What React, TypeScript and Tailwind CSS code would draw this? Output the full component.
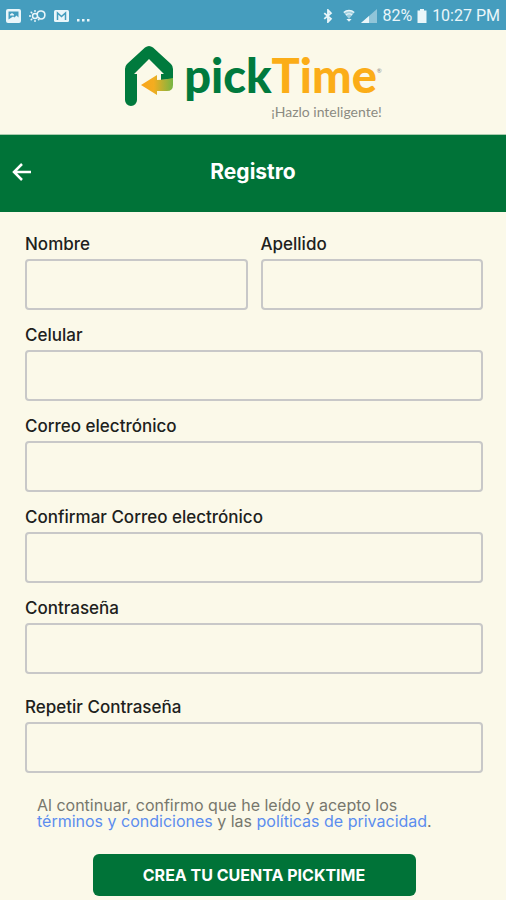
import { useState } from "react"
import type { FormEvent } from "react"

interface FieldProps {
  id: string
  label: string
  type?: string
  className?: string
}

function Field({ id, label, type = "text", className = "" }: FieldProps) {
  const [value, setValue] = useState("")

  return (
    <div className={`flex min-w-0 flex-col gap-[5px] ${className}`}>
      <label htmlFor={id} className="text-[17px] leading-5 font-medium text-[#20211c]">
        {label}
      </label>
      <input
        id={id}
        type={type}
        value={value}
        onChange={(e) => setValue(e.target.value)}
        className="h-[51px] w-full rounded border-2 border-[#c8c8c8] bg-transparent px-3 text-base outline-none focus:border-[#007338]"
      />
    </div>
  )
}

function StatusBar() {
  return (
    <div className="flex h-[30px] items-center justify-between bg-[#459dbe] px-[6px] pt-[2px] font-['Roboto',sans-serif] text-base text-[#eaf6fa]">
      <div className="flex items-center gap-2">
        <svg width="15" height="14" viewBox="0 0 15 14" aria-hidden="true">
          <rect width="15" height="14" rx="2" fill="#eaf6fa" />
          <path d="M2.5 2.5h10v6l-2-2-2 2-1.5-1-4.500 3z" fill="#459dbe" />
          <path d="M4 5.500l2-1.500 2 1.500v1H4z" fill="#eaf6fa" />
        </svg>
        <svg width="17" height="14" viewBox="0 0 17 14" fill="none" stroke="#eaf6fa" aria-hidden="true">
          <circle cx="6" cy="7" r="2.500" strokeWidth="1.500" />
          <path d="M6 1v2M6 11v2M0 7h2M1.700 2.700l1.500 1.500M1.700 11.300l1.500-1.500M9 10l1.300 1.300" strokeWidth="1.400" />
          <path d="M8 5a4 4 0 1 1 4 5c-2 0-2-1.500-3-2" strokeWidth="1.600" />
        </svg>
        <svg width="15" height="12" viewBox="0 0 15 12" aria-hidden="true">
          <rect width="15" height="12" rx="1.500" fill="#eaf6fa" />
          <path d="M3.500 10V3l4 3.500 4-3.500v7" fill="none" stroke="#459dbe" strokeWidth="1.500" />
        </svg>
        <svg width="13" height="14" viewBox="0 0 13 14" fill="#eaf6fa" aria-hidden="true">
          <path d="M0 10h2.500v2.500H0zM5 10h2.500v2.500H5zM10 10h2.500v2.500H10z" />
        </svg>
      </div>
      <div className="flex items-center gap-[5px]">
        <svg width="10" height="14" viewBox="0 0 12 16" fill="none" stroke="#eaf6fa" strokeWidth="2.200" aria-hidden="true">
          <path d="M1.500 4.500l8 7L6 15V1l3.500 3.500-8 7" />
        </svg>
        <svg width="14" height="14" viewBox="0 0 16 15" className="ml-1" aria-hidden="true">
          <path d="M2 3.500a9 9 0 0 1 12 0L8 11z" fill="#eaf6fa" opacity=".55" />
          <path d="M2 3.500a9 9 0 0 1 12 0M4.500 6.500a5 5 0 0 1 7 0" fill="none" stroke="#eaf6fa" strokeWidth="1.500" />
          <path d="M5 11l3 3 3-3z" fill="#eaf6fa" />
        </svg>
        <svg width="16" height="14" viewBox="0 0 16 14" aria-hidden="true">
          <path d="M0 14L16 0v14z" fill="#eaf6fa" opacity=".45" />
          <path d="M0 14l8-7v7z" fill="#eaf6fa" />
        </svg>
        <span>82%</span>
        <svg width="10" height="14" viewBox="0 0 10 14" fill="#eaf6fa" aria-hidden="true">
          <path d="M3 0h4v1.500h2.500V14H.5V1.500H3z" />
        </svg>
        <time>10:27 PM</time>
      </div>
    </div>
  )
}

function Logo() {
  return (
    <div className="flex h-[104px] justify-center gap-[10px] pt-4">
      <svg width="50" height="62" viewBox="0 0 50 62" aria-hidden="true">
        <defs>
          <linearGradient id="arrow" x1="0" x2="1">
            <stop offset="0" stopColor="#f9a51a" />
            <stop offset=".4" stopColor="#f3ad20" />
            <stop offset="1" stopColor="#75b543" />
          </linearGradient>
        </defs>
        <path
          d="M1 23q0-3 2-5L21 1.500q4-3 8 0L47 18q2 2 2 5v10l-12 1v-6h3L25 13 10 28h3v26a6 6 0 0 1-12 0z"
          fill="#007a3d"
        />
        <path d="M17 39l16-10v5q8 0 16-2v7q0 6-6 6H33v4z" fill="url(#arrow)" />
      </svg>
      <div className="flex flex-col">
        <div className="flex items-start font-['Lato',sans-serif] text-[47px] leading-[58px] font-black">
          <span className="text-[#007a3d]">pick</span>
          <span className="text-[#fbad18]">Time</span>
          <span className="mt-5 text-[6px] leading-[10px] font-normal text-[#888]">®</span>
        </div>
        <p className="self-end font-['Lato',sans-serif] text-sm leading-4 text-[#8b8b82]">¡Hazlo inteligente!</p>
      </div>
    </div>
  )
}

export default function App() {
  const handleSubmit = (e: FormEvent) => {
    e.preventDefault()
  }

  return (
    <div className="min-h-screen bg-[#fbf9e9] font-['Inter',sans-serif]">
      <StatusBar />
      <Logo />

      {/* Title bar */}
      <header className="grid h-[78px] grid-cols-[48px_1fr_48px] items-center border-t border-[#a9ccae] bg-[#007338] pb-1 text-white">
        <button type="button" aria-label="Volver" className="flex h-12 items-center pl-3">
          <svg width="20" height="20" viewBox="0 0 20 20" fill="none" stroke="currentColor" strokeWidth="2.500" aria-hidden="true">
            <path d="M19 10H2M10 2l-8 8 8 8" />
          </svg>
        </button>
        <h1 className="text-center text-[21px] font-bold">Registro</h1>
      </header>

      <form onSubmit={handleSubmit} className="flex flex-col pt-[22px] pr-[23px] pb-[3px] pl-[25px]">
        <div className="flex flex-col gap-[15px]">
          <div className="grid grid-cols-2 gap-[13px]">
            <Field id="nombre" label="Nombre" />
            <Field id="apellido" label="Apellido" />
          </div>
          <Field id="celular" label="Celular" type="tel" />
          <Field id="correo" label="Correo electrónico" type="email" />
          <Field id="confirmar-correo" label="Confirmar Correo electrónico" type="email" />
          <Field id="contrasena" label="Contraseña" type="password" />
          <Field id="repetir-contrasena" label="Repetir Contraseña" type="password" className="mt-2" />
        </div>

        <p className="mt-6 px-3 text-base leading-4 text-[#77776d]">
          Al continuar, confirmo que he leído y acepto los
          <br />
          <a href="#terminos" className="text-[#5b8def]">
            términos y condiciones
          </a>{" "}
          y las{" "}
          <a href="#privacidad" className="text-[#5b8def]">
            políticas de privacidad
          </a>
          .
        </p>

        <button
          type="submit"
          className="mt-[25px] h-[42px] w-full max-w-[323px] self-center rounded-md bg-[#007338] text-base font-bold text-white"
        >
          CREA TU CUENTA PICKTIME
        </button>
      </form>
    </div>
  )
}
